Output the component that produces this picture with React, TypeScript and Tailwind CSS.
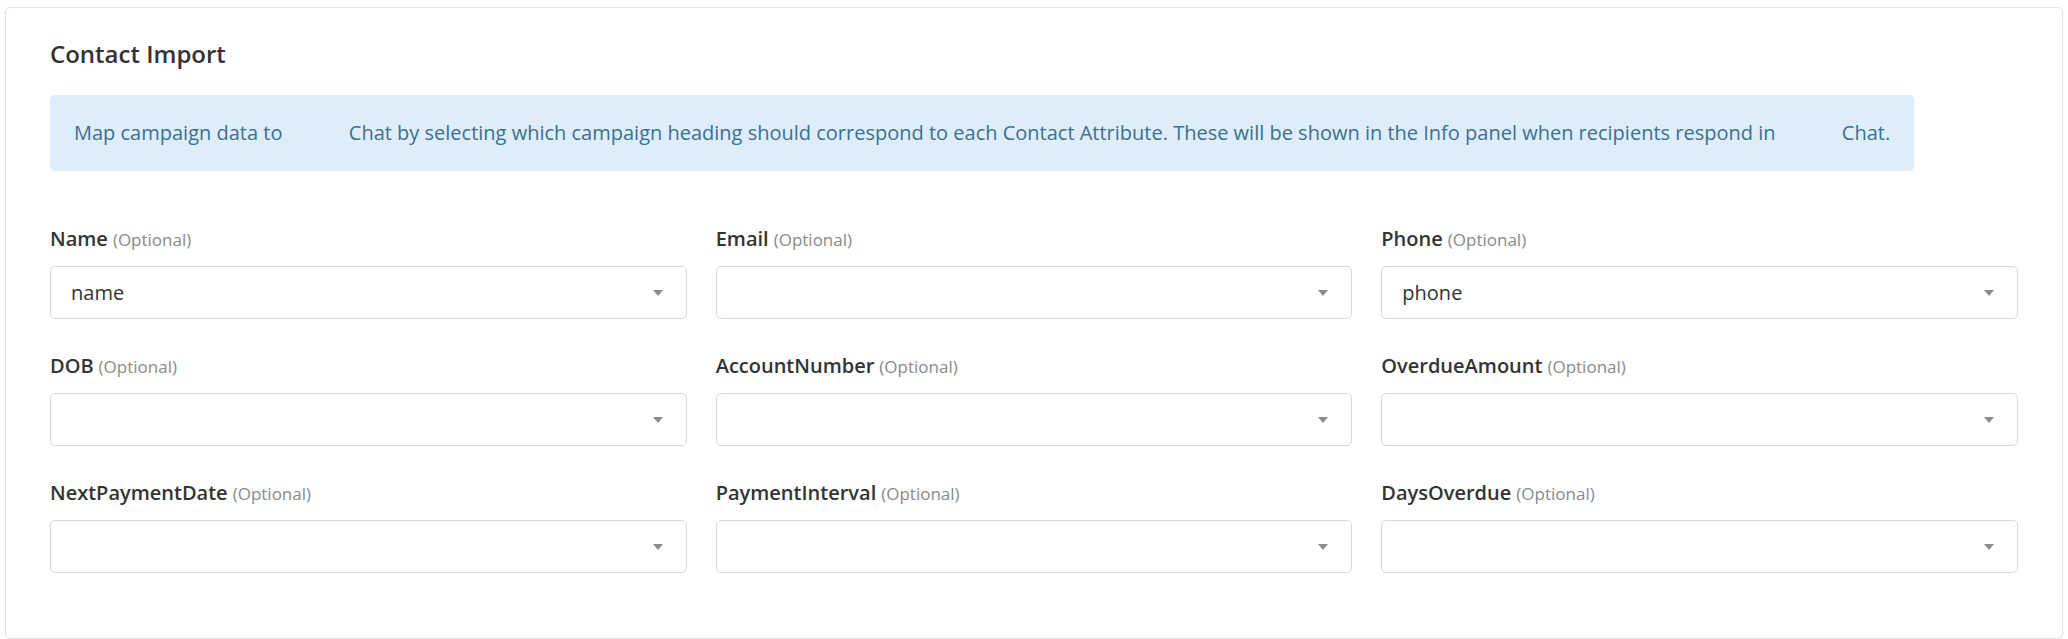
import { useState } from 'react';

type Field = { label: string; value: string };

const fields: Field[] = [
  { label: 'Name', value: 'name' },
  { label: 'Email', value: '' },
  { label: 'Phone', value: 'phone' },
  { label: 'DOB', value: '' },
  { label: 'AccountNumber', value: '' },
  { label: 'OverdueAmount', value: '' },
  { label: 'NextPaymentDate', value: '' },
  { label: 'PaymentInterval', value: '' },
  { label: 'DaysOverdue', value: '' },
];

function SelectBox({ value }: { value: string }) {
  return (
    <div className="relative flex h-[53px] items-center rounded-[5px] border border-[#d5d9de] bg-white pl-5 pr-12 text-[20px] text-[#333]">
      <span>{value}</span>
      {/* caret */}
      <span className="absolute right-[23px] top-1/2 h-0 w-0 -translate-y-1/2 border-x-[5.5px] border-t-[6px] border-x-transparent border-t-[#8c8c8c]" />
    </div>
  );
}

export default function App() {
  const [mapping] = useState(fields);

  return (
    <div className="min-h-[639px] bg-white px-[5px] pt-[7px]" style={{ fontFamily: '"Open Sans", "Noto Sans", sans-serif' }}>
      <div className="rounded-[5px] border border-[#e2e2e2] px-[44px] pb-[65px] pt-[30px]">
        <h2 className="text-[24px] font-semibold leading-8 text-[#333]">Contact Import</h2>

        {/* Info alert */}
        <div className="mt-[25px] w-fit rounded-[5px] bg-[#deedf8] px-6 py-6 text-[20px] leading-7 text-[#3b7193]">
          Map campaign data to <span className="inline-block w-[56px]" /> Chat by selecting which campaign heading should correspond to each Contact Attribute. These will be shown in the Info panel when recipients respond in <span className="inline-block w-[56px]" /> Chat.
        </div>

        {/* Mapping fields */}
        <div className="mt-[55px] grid grid-cols-3 gap-x-[29px] gap-y-[34px]">
          {mapping.map((f) => (
            <div key={f.label}>
              <div className="mb-[14px] flex h-[26px] items-baseline gap-[5px] leading-[26px]">
                <span className="text-[20px] font-semibold text-[#333]">{f.label}</span>
                <span className="text-[17px] text-[#8a8a8a]">(Optional)</span>
              </div>
              <SelectBox value={f.value} />
            </div>
          ))}
        </div>
      </div>
    </div>
  );
}
